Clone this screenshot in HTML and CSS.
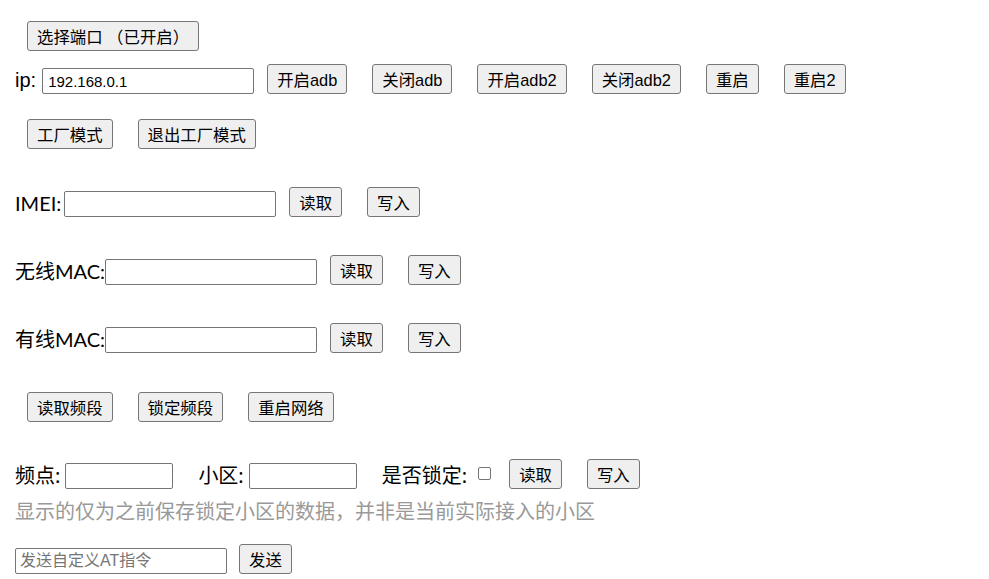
FILE: index.html
```html
<!DOCTYPE html>
<html lang="zh">
<head>
<meta charset="utf-8">
<title>设备调试</title>
<link rel="stylesheet" href="styles.css">
</head>
<body>
<div class="page">
  <div class="row r1 indent">
    <button class="btn">选择端口 （已开启）</button>
  </div>
  <div class="row r2">
    <span class="label lat">ip:</span>
    <input class="field ip" type="text" value="192.168.0.1">
    <div class="btns first">
      <button class="btn">开启adb</button>
      <button class="btn">关闭adb</button>
      <button class="btn">开启adb2</button>
      <button class="btn">关闭adb2</button>
      <button class="btn">重启</button>
      <button class="btn">重启2</button>
    </div>
  </div>
  <div class="row r3 indent">
    <div class="btns">
      <button class="btn">工厂模式</button>
      <button class="btn">退出工厂模式</button>
    </div>
  </div>
  <div class="row r4">
    <span class="label">IMEI:</span>
    <input class="field" type="text">
    <div class="btns first">
      <button class="btn">读取</button>
      <button class="btn">写入</button>
    </div>
  </div>
  <div class="row r5">
    <span class="label mac">无线MAC:</span>
    <input class="field" type="text">
    <div class="btns first">
      <button class="btn">读取</button>
      <button class="btn">写入</button>
    </div>
  </div>
  <div class="row r5">
    <span class="label mac">有线MAC:</span>
    <input class="field" type="text">
    <div class="btns first">
      <button class="btn">读取</button>
      <button class="btn">写入</button>
    </div>
  </div>
  <div class="row r7 indent">
    <div class="btns">
      <button class="btn">读取频段</button>
      <button class="btn">锁定频段</button>
      <button class="btn">重启网络</button>
    </div>
  </div>
  <div class="row r8">
    <span class="label cjk">频点:</span>
    <input class="field short" type="text">
    <span class="label cjk gapl">小区:</span>
    <input class="field short" type="text">
    <span class="label cjk gapl">是否锁定:</span>
    <input class="check" type="checkbox">
    <div class="btns first2">
      <button class="btn">读取</button>
      <button class="btn">写入</button>
    </div>
  </div>
  <p class="note">显示的仅为之前保存锁定小区的数据，并非是当前实际接入的小区</p>
  <div class="row r9">
    <input class="field at" type="text" placeholder="发送自定义AT指令">
    <button class="btn send">发送</button>
  </div>
</div>
</body>
</html>
```

FILE: styles.css
```css
html, body {
  margin: 0;
  padding: 0;
  background: #ffffff;
}
.page {
  padding: 21px 15px 0 15px;
  display: flex;
  flex-direction: column;
  align-items: flex-start;
  font-family: "Lato", "Noto Sans CJK SC", sans-serif;
  font-size: 20px;
  color: #000;
}
.row {
  display: flex;
  align-items: flex-end;
}
.indent { padding-left: 12px; }
.r2 { margin-top: 13px; }
.r3 { margin-top: 25px; }
.r4 { margin-top: 38px; }
.r5 { margin-top: 38px; }
.r7 { margin-top: 39px; }
.r8 { margin-top: 37px; }
.r9 { margin-top: 19px; }

.label {
  line-height: 27px;
  margin-right: 3px;
  white-space: nowrap;
}
.label.mac { margin-right: 0; }
.label.cjk {
  font-family: "Noto Sans", "Noto Sans CJK SC", sans-serif;
  margin-right: 5px;
}
.lat {
  font-family: "Liberation Sans", "Noto Sans CJK SC", sans-serif;
  margin-right: 6px;
}
.gapl { margin-left: 25px; }

.btns {
  display: flex;
  gap: 25px;
}
.first { margin-left: 13px; }
.first2 { margin-left: 18px; }

.btn {
  font-family: "Liberation Sans", "Noto Sans CJK SC", sans-serif;
  font-size: 16.4px;
  height: 30px;
  padding: 0 9px;
  margin: 0;
  background: #efefef;
  border: 1px solid #767676;
  border-radius: 3px;
  color: #000;
  white-space: nowrap;
}
.send { margin-left: 12px; }

.field {
  box-sizing: border-box;
  width: 212px;
  height: 26px;
  margin: 0;
  padding: 1px 5px;
  border: 1px solid #767676;
  border-radius: 2px;
  background: #fff;
  font-family: "Liberation Sans", "Noto Sans CJK SC", sans-serif;
  font-size: 15px;
  color: #000;
}
.field.short { width: 108px; }
.field.at {
  font-size: 16px;
  height: 26px;
  padding: 1px 4px;
}
.field.at::placeholder { color: #757575; }

.check {
  appearance: none;
  -webkit-appearance: none;
  box-sizing: border-box;
  width: 13px;
  height: 13px;
  margin: 0 0 9px 6px;
  border: 1px solid #767676;
  border-radius: 2px;
  background: #fff;
}

.note {
  margin: 9px 0 0 0;
  font-size: 20px;
  line-height: 27px;
  color: #999999;
  font-family: "Noto Sans", "Noto Sans CJK SC", sans-serif;
}
```
